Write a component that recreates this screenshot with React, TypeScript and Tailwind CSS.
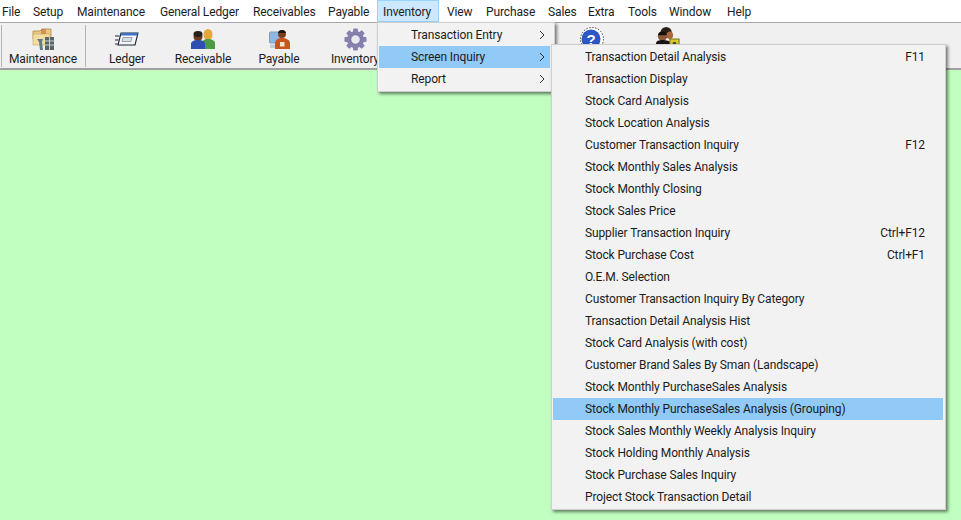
import { ReactNode } from 'react';

const FONT = "font-['Roboto','Open_Sans',sans-serif] tracking-[-0.12px]";

const TOP_MENU = [
  { label: 'File', w: 'w-[27px] pl-[2px]' },
  { label: 'Setup', w: 'w-[44px] pl-[6px]' },
  { label: 'Maintenance', w: 'w-[83px] pl-[6px]' },
  { label: 'General Ledger', w: 'w-[93px] pl-[6px]' },
  { label: 'Receivables', w: 'w-[75px] pl-[6px]' },
  { label: 'Payable', w: 'w-[55px] pl-[6px]' },
  { label: 'Inventory', w: 'w-[62px] pl-[5px]', active: true },
  { label: 'View', w: 'w-[41px] pl-[8px]' },
  { label: 'Purchase', w: 'w-[62px] pl-[6px]' },
  { label: 'Sales', w: 'w-[40px] pl-[6px]' },
  { label: 'Extra', w: 'w-[40px] pl-[6px]' },
  { label: 'Tools', w: 'w-[41px] pl-[6px]' },
  { label: 'Window', w: 'w-[58px] pl-[6px]' },
  { label: 'Help', w: 'w-[40px] pl-[6px]' },
];

const INQUIRY_ITEMS = [
  { label: 'Transaction Detail Analysis', key: 'F11' },
  { label: 'Transaction Display' },
  { label: 'Stock Card Analysis' },
  { label: 'Stock Location Analysis' },
  { label: 'Customer Transaction Inquiry', key: 'F12' },
  { label: 'Stock Monthly Sales Analysis' },
  { label: 'Stock Monthly Closing' },
  { label: 'Stock Sales Price' },
  { label: 'Supplier Transaction Inquiry', key: 'Ctrl+F12' },
  { label: 'Stock Purchase Cost', key: 'Ctrl+F1' },
  { label: 'O.E.M. Selection' },
  { label: 'Customer Transaction Inquiry By Category' },
  { label: 'Transaction Detail Analysis Hist' },
  { label: 'Stock Card Analysis (with cost)' },
  { label: 'Customer Brand Sales By Sman (Landscape)' },
  { label: 'Stock Monthly PurchaseSales Analysis' },
  { label: 'Stock Monthly PurchaseSales Analysis (Grouping)', active: true },
  { label: 'Stock Sales Monthly Weekly Analysis Inquiry' },
  { label: 'Stock Holding Monthly Analysis' },
  { label: 'Stock Purchase Sales Inquiry' },
  { label: 'Project Stock Transaction Detail' },
];

function FolderIcon() {
  return (
    <svg width="22" height="23" viewBox="0 0 22 23">
      <path d="M1 3h7l2-2h9v10H1z" fill="#e8c982" stroke="#a98a45" strokeWidth="0.8" />
      <path d="M1 6h17v11H1z" fill="#f3dc9f" stroke="#c9a55c" strokeWidth="0.6" />
      <path d="M9 1h5v5H9z" fill="#c4623a" opacity="0.55" />
      <rect x="13" y="9" width="9" height="13" fill="#5b6468" />
      <path d="M13 13h9M13 17h9M17.5 9v13" stroke="#d7dcdc" strokeWidth="0.9" />
      <path d="M5 11h6l-1 3 1 8H8l-1-8z" fill="#5f7f8f" />
    </svg>
  );
}

function LedgerIcon() {
  return (
    <svg width="24" height="14" viewBox="0 0 24 14">
      <path d="M6 1h17l-3 12H3z" fill="#f4f6fb" stroke="#1b2335" strokeWidth="1.1" />
      <path d="M6.5 1H23l-.7 2.6H5.8z" fill="#3f6fc4" />
      <path d="M8 5.5h9l-1 4H7z" fill="#d8dce4" stroke="#6a7280" strokeWidth="0.6" />
      <path d="M0 4h4.5M0 8h3.5M0 12h2.5" stroke="#1b2335" strokeWidth="1" />
    </svg>
  );
}

function PeopleIcon() {
  return (
    <svg width="24" height="21" viewBox="0 0 24 21">
      <ellipse cx="17" cy="5.5" rx="4.5" ry="5.5" fill="#e5a63e" />
      <path d="M11 20v-6c0-2.5 3-4 6-4s7 1.5 7 4v6z" fill="#4d9a45" />
      <ellipse cx="7" cy="7.5" rx="4.5" ry="5" fill="#6b3a1f" />
      <ellipse cx="7" cy="5" rx="4.5" ry="3" fill="#262019" />
      <path d="M0 20v-5c0-2.5 3-4 7-4s7 1.5 7 4v5z" fill="#2c4fb0" />
    </svg>
  );
}

function PayableIcon() {
  return (
    <svg width="21" height="21" viewBox="0 0 21 21">
      <rect x="0.5" y="3" width="11" height="11" rx="1" fill="#8fb7e6" stroke="#8c9aa8" />
      <path d="M1 15.5h9V19H1z" fill="#c3ccd6" />
      <ellipse cx="13" cy="5" rx="4" ry="4" fill="#7b3f1e" />
      <path d="M9 4c1-4 7-4 8 0z" fill="#1c1714" />
      <path d="M6 20v-6c0-3 3-5 7-5s8 2 8 5v6z" fill="#c8561c" />
      <rect x="11" y="13" width="4.5" height="4.5" fill="#efe4cf" />
    </svg>
  );
}

function GearIcon() {
  return (
    <svg width="23" height="23" viewBox="0 0 24 24">
      <g fill="#8580ad">
        <circle cx="12" cy="12" r="9" />
        <rect x="9.5" y="0.5" width="5" height="23" rx="1" />
        <rect x="9.5" y="0.5" width="5" height="23" rx="1" transform="rotate(45 12 12)" />
        <rect x="9.5" y="0.5" width="5" height="23" rx="1" transform="rotate(90 12 12)" />
        <rect x="9.5" y="0.5" width="5" height="23" rx="1" transform="rotate(135 12 12)" />
      </g>
      <circle cx="12" cy="12" r="5" fill="#e9e9ee" stroke="#6f6a98" />
    </svg>
  );
}

function HelpIcon() {
  return (
    <svg width="24" height="24" viewBox="0 0 24 24">
      <circle cx="12" cy="12" r="11.5" fill="#fff" stroke="#222" strokeWidth="0.8" strokeDasharray="1.5 1.5" />
      <circle cx="11" cy="12" r="9.5" fill="#2c57c4" />
      <text x="11" y="17.5" textAnchor="middle" fontSize="15" fontWeight="700" fill="#fff" fontFamily="Liberation Sans, sans-serif">?</text>
    </svg>
  );
}

function UsersLockIcon() {
  return (
    <svg width="24" height="24" viewBox="0 0 26 26">
      <ellipse cx="11" cy="6" rx="6" ry="6" fill="#2a1e16" />
      <ellipse cx="7" cy="10" rx="5" ry="5" fill="#8a5a3a" />
      <path d="M2 9c1-6 9-6 10 0z" fill="#14100c" />
      <ellipse cx="15" cy="9" rx="3.5" ry="4" fill="#a9683a" />
      <path d="M0 25v-7c0-3 3-4 7-4s9 1 9 4v7z" fill="#1a1512" />
      <rect x="15" y="13" width="10" height="10" fill="#d6c92e" stroke="#6e6a18" />
      <circle cx="20" cy="18" r="2" fill="#4b4a16" />
    </svg>
  );
}

function ToolButton({ icon, label, className }: { icon: ReactNode; label?: string; className: string }) {
  return (
    <div className={`flex shrink-0 flex-col items-center pt-[2px] ${className}`}>
      <div className="flex h-[24px] shrink-0 items-center justify-center">{icon}</div>
      <span className="shrink-0 whitespace-nowrap text-[12px] leading-[16px] text-[#1c1c1c]">{label}</span>
    </div>
  );
}

function Chevron() {
  return (
    <svg width="6" height="10" viewBox="0 0 6 10" className="shrink-0">
      <path d="M1 1l4 4-4 4" fill="none" stroke="#333" strokeWidth="1" />
    </svg>
  );
}

export default function App() {
  return (
    <div className={`relative flex h-[520px] w-[961px] flex-col overflow-hidden bg-[#c1ffc1] ${FONT}`}>
      {/* menu bar */}
      <div className="flex h-[23px] shrink-0 items-stretch border-b border-[#a6a6a6] bg-white">
        {TOP_MENU.map((m) => (
          <div
            key={m.label}
            className={`flex shrink-0 items-center whitespace-nowrap pt-[1px] text-[12px] text-[#1c1c1c] ${m.w} ${
              m.active ? 'border border-[#99d1ff] bg-[#cce8ff]' : ''
            }`}
          >
            {m.label}
          </div>
        ))}
      </div>

      {/* toolbar */}
      <div className="flex h-[47px] shrink-0 items-stretch border-b-2 border-[#a0a0a0] bg-[#f0f0f0] pt-[2px]">
        <div className="h-[42px] w-[2px] shrink-0 border-r border-[#b5b5b5]" />
        <ToolButton icon={<FolderIcon />} label="Maintenance" className="w-[82px]" />
        <div className="h-[42px] w-[2px] shrink-0 border-r border-[#b5b5b5]" />
        <div className="w-[3px] shrink-0" />
        <ToolButton icon={<LedgerIcon />} label="Ledger" className="w-[76px]" />
        <ToolButton icon={<PeopleIcon />} label="Receivable" className="w-[76px]" />
        <ToolButton icon={<PayableIcon />} label="Payable" className="w-[76px]" />
        <ToolButton icon={<GearIcon />} label="Inventory" className="w-[76px]" />
        <div className="w-[161px] shrink-0" />
        <ToolButton icon={<HelpIcon />} className="w-[76px]" />
        <ToolButton icon={<UsersLockIcon />} className="w-[76px]" />
      </div>

      {/* inventory dropdown */}
      <div className="absolute left-[377px] top-[22px] z-10 w-[178px] border border-[#cfcfcf] bg-[#f2f2f2] py-[1px] pl-[1px] pr-[4px] shadow-[2px_2px_3px_rgba(0,0,0,0.5)]">
        {['Transaction Entry', 'Screen Inquiry', 'Report'].map((label) => (
          <div
            key={label}
            className={`flex h-[22px] items-center justify-between pl-[32px] pr-[5px] text-[12px] text-[#1c1c1c] ${
              label === 'Screen Inquiry' ? 'bg-[#91c9f7]' : ''
            }`}
          >
            <span>{label}</span>
            <Chevron />
          </div>
        ))}
      </div>

      {/* screen inquiry submenu */}
      <div className="absolute left-[551px] top-[44px] z-20 w-[395px] border border-[#cfcfcf] bg-[#f2f2f2] pb-[1px] pl-[1px] pr-[2px] pt-[1px] shadow-[2px_2px_3px_rgba(0,0,0,0.5)]">
        {INQUIRY_ITEMS.map((item) => (
          <div
            key={item.label}
            className={`flex h-[22px] items-center justify-between pl-[32px] pr-[18px] text-[12px] text-[#1c1c1c] ${
              item.active ? 'bg-[#91c9f7]' : ''
            }`}
          >
            <span className="whitespace-nowrap">{item.label}</span>
            {item.key && <span className="whitespace-nowrap">{item.key}</span>}
          </div>
        ))}
      </div>
    </div>
  );
}
